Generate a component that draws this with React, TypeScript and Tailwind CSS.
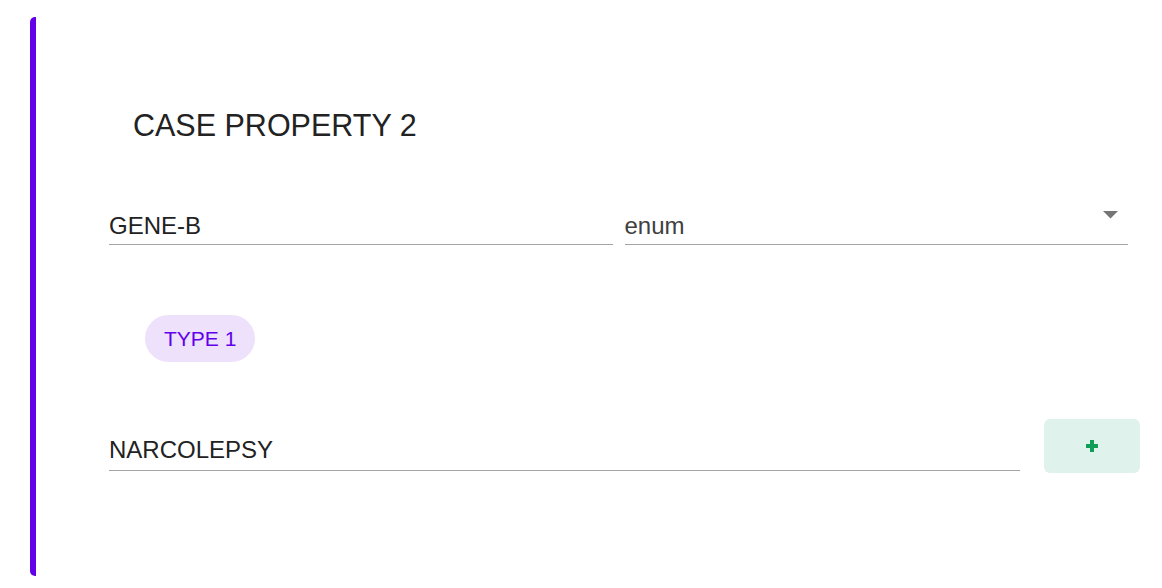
import React from "react";

function Input({ value, className = "", textClass = "text-[#222222]" }: { value: string; className?: string; textClass?: string }) {
  return (
    <div className={`border-b border-[#a3a3a3] pb-[4px] ${className}`}>
      <div className={`h-[28px] text-[24px] leading-[28px] ${textClass}`}>{value}</div>
    </div>
  );
}

export default function App() {
  return (
    <div
      className="w-[1162px] h-[588px] bg-white overflow-hidden pl-[30px] pt-[17px]"
      style={{ fontFamily: '"Liberation Sans", Arial, sans-serif' }}
    >
      <div className="h-[559px] w-[1200px] border-l-[6px] border-[#6200ea] rounded-l-[5px] pt-[91px] pl-[73px]">
        <div className="pl-[24px] text-[30.5px] leading-[34px] text-[#222222]">CASE PROPERTY 2</div>

        <div className="mt-[70px] flex gap-[12px] w-[1019px]">
          <Input value="GENE-B" className="flex-1" />
          <div className="relative flex-1">
            <Input value="enum" textClass="text-[#404040]" />
            <svg
              className="absolute right-[10px] top-[-1px]"
              width="15"
              height="8"
              viewBox="0 0 15 8"
            >
              <path d="M0 0 L15 0 L7.5 7.5 Z" fill="#757575" />
            </svg>
          </div>
        </div>

        <div className="mt-[70px] pl-[36px]">
          <div className="inline-flex h-[47px] items-center rounded-full bg-[#ede1fb] px-[19px] text-[21px] text-[#6200ea]">
            TYPE 1
          </div>
        </div>

        <div className="mt-[57px] flex items-start gap-[24px]">
          <div className="mt-[17px] w-[911px] border-b border-[#a3a3a3] pb-[6px]">
            <div className="h-[28px] text-[24px] leading-[28px] text-[#222222]">NARCOLEPSY</div>
          </div>
          <button className="flex h-[54px] w-[96px] items-center justify-center rounded-[6px] bg-[#dff2eb]">
            <svg width="12" height="12" viewBox="0 0 12 12">
              <path d="M4 0h4v4h4v4H8v4H4V8H0V4h4z" fill="#0f9d58" />
            </svg>
          </button>
        </div>
      </div>
    </div>
  );
}
